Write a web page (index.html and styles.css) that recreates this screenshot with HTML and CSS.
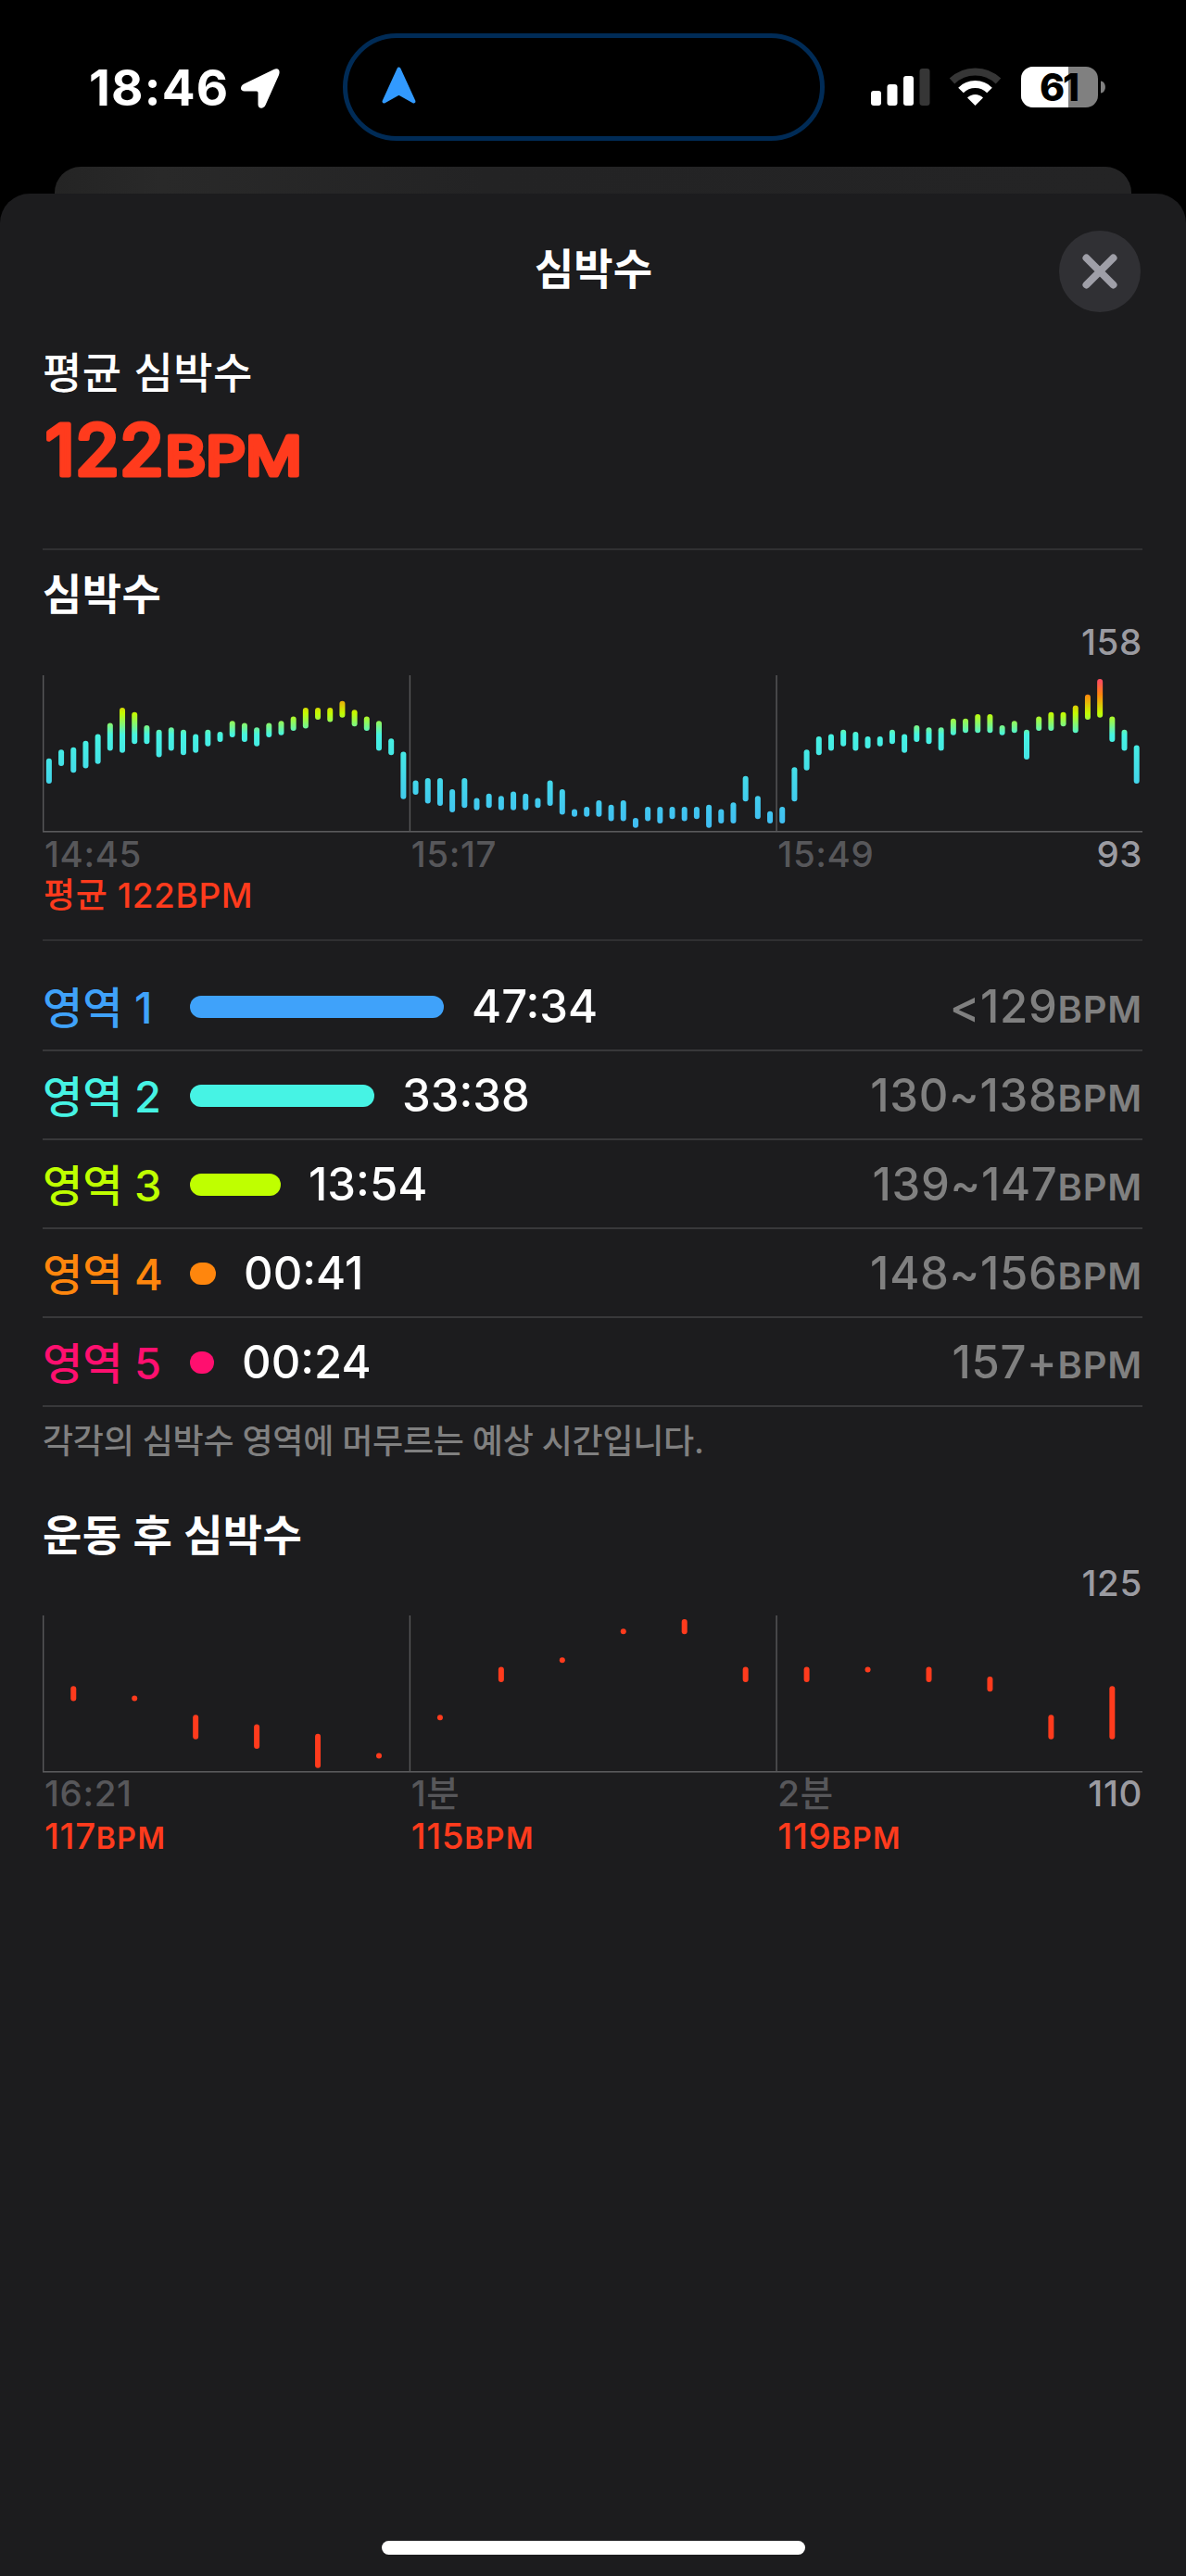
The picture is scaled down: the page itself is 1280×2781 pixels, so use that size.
FILE: index.html
```html
<!DOCTYPE html>
<html lang="ko">
<head>
  <meta charset="UTF-8" />
  <title>심박수</title>
  <link rel="stylesheet" href="styles.css">
</head>
<body>
  <!-- Status bar -->
  <div class="status-bar">
    <div class="clock">
      <span class="time">18:46</span>
      <svg class="location-icon" viewBox="0 0 42 43">
        <path d="M35.500 1 L3.500 16.500 C-1.500 19 -1 24.500 4 24.500 H17 Q18.500 24.500 18.500 26 V39 C18.500 43.500 24.500 44 26.500 39.500 L41 7 C43 2 40 -1 35.500 1 Z" fill="#fff"/>
      </svg>
    </div>
    <div class="island">
      <svg class="nav-arrow" viewBox="0 0 37 40">
        <path d="M18.500 2.500 L34.500 37.500 L18.500 28.500 L2.500 37.500 Z" fill="#329aff" stroke="#329aff" stroke-width="4" stroke-linejoin="round"/>
      </svg>
    </div>
    <div class="status-icons">
      <svg class="signal-icon" viewBox="0 0 64 41">
        <rect x="0" y="25" width="11" height="16" rx="3" fill="#fff"/>
        <rect x="17.500" y="18" width="11" height="23" rx="3" fill="#fff"/>
        <rect x="35" y="9" width="11" height="32" rx="3" fill="#fff"/>
        <rect x="52.500" y="1" width="11" height="40" rx="3" fill="#363636"/>
      </svg>
      <svg class="wifi-icon" viewBox="0 0 56 41">
        <path d="M3 14.500 A36 36 0 0 1 53 14.500" fill="none" stroke="#363636" stroke-width="8"/>
        <path d="M12.500 24.500 A22 22 0 0 1 43.500 24.500" fill="none" stroke="#fff" stroke-width="8"/>
        <path d="M19.500 32.500 A12 12 0 0 1 36.500 32.500 L28 41 Z" fill="#fff"/>
      </svg>
      <svg class="battery-icon" viewBox="0 0 91 44">
        <defs>
          <clipPath id="batteryShape"><rect x="0" y="0" width="83" height="44" rx="13"/></clipPath>
        </defs>
        <g clip-path="url(#batteryShape)">
          <rect x="0" y="0" width="83" height="44" fill="#808080"/>
          <rect x="0" y="0" width="51" height="44" fill="#fff"/>
        </g>
        <path d="M86 15.500 C92.500 16 92.500 28 86 28.500 Z" fill="#808080"/>
        <text x="40.500" y="36.500" text-anchor="middle" class="battery-text">61</text>
      </svg>
    </div>
  </div>

  <div class="back-card"></div>

  <div class="sheet">
    <div class="sheet-header">
      <h1>심박수</h1>
      <button class="close-btn" aria-label="닫기">
        <svg viewBox="0 0 38 38">
          <path d="M4.500 4.500 L33.500 33.500 M33.500 4.500 L4.500 33.500" stroke="#9f9fa8" stroke-width="8" stroke-linecap="round"/>
        </svg>
      </button>
    </div>

    <!-- Average heart rate -->
    <div class="average">
      <div class="average-label">평균 심박수</div>
      <svg class="average-value" viewBox="0 0 300 117">
        <text x="3" y="85.500" class="average-number" textLength="128" lengthAdjust="spacingAndGlyphs">122</text>
        <text x="132" y="85.500" class="average-unit" textLength="148" lengthAdjust="spacingAndGlyphs">BPM</text>
      </svg>
    </div>

    <!-- Workout heart rate -->
    <div class="section workout">
      <h2>심박수</h2>
      <div class="peak">158</div>
      <svg class="chart" id="workoutChart" viewBox="0 0 1187 170">
        <defs>
          <linearGradient id="zoneGradient" gradientUnits="userSpaceOnUse" x1="0" y1="7" x2="0" y2="161.700">
            <stop offset="0" stop-color="#ff4f5c"/>
            <stop offset="0.090" stop-color="#ff850d"/>
            <stop offset="0.220" stop-color="#c4fb00"/>
            <stop offset="0.370" stop-color="#46f3e2"/>
            <stop offset="1" stop-color="#40bdf2"/>
          </linearGradient>
        </defs>
      </svg>
      <div class="axis-labels">
        <span>14:45</span>
        <span>15:17</span>
        <span>15:49<em>93</em></span>
      </div>
      <div class="chart-average">평균 122BPM</div>
    </div>

    <!-- Heart rate zones -->
    <div class="zones">
      <div class="zone zone-1">
        <span class="zone-name">영역 1</span>
        <span class="zone-bar" style="width: 274px"></span>
        <span class="zone-time">47:34</span>
        <span class="zone-range">&lt;129<small>BPM</small></span>
      </div>
      <div class="zone zone-2">
        <span class="zone-name">영역 2</span>
        <span class="zone-bar" style="width: 199px"></span>
        <span class="zone-time">33:38</span>
        <span class="zone-range">130~138<small>BPM</small></span>
      </div>
      <div class="zone zone-3">
        <span class="zone-name">영역 3</span>
        <span class="zone-bar" style="width: 98px"></span>
        <span class="zone-time">13:54</span>
        <span class="zone-range">139~147<small>BPM</small></span>
      </div>
      <div class="zone zone-4">
        <span class="zone-name">영역 4</span>
        <span class="zone-bar" style="width: 28px"></span>
        <span class="zone-time">00:41</span>
        <span class="zone-range">148~156<small>BPM</small></span>
      </div>
      <div class="zone zone-5">
        <span class="zone-name">영역 5</span>
        <span class="zone-bar" style="width: 26px"></span>
        <span class="zone-time">00:24</span>
        <span class="zone-range">157+<small>BPM</small></span>
      </div>
    </div>
    <p class="zones-note">각각의 심박수 영역에 머무르는 예상 시간입니다.</p>

    <!-- Post-workout heart rate -->
    <div class="section recovery">
      <h2>운동 후 심박수</h2>
      <div class="peak">125</div>
      <svg class="chart" id="recoveryChart" viewBox="0 0 1187 170"></svg>
      <div class="axis-labels">
        <span>16:21</span>
        <span>1분</span>
        <span>2분<em>110</em></span>
      </div>
      <div class="axis-values">
        <span>117<small>BPM</small></span>
        <span>115<small>BPM</small></span>
        <span>119<small>BPM</small></span>
      </div>
    </div>
    <div class="home-indicator"></div>
  </div>

  <script>
    // [low, high] BPM for each slice of the workout
    const workout = [
      [113,122],[121,126],[118,127],[120,130],[122,133],[128,138],[127,145],[131,143],[131,137],[125,135],
      [128,136],[126,135],[127,133],[130,135],[132,134],[134,139],[132,138],[130,136],[134,138],[135,139],
      [137,141],[138,145],[142,145],[141,145],[143,148],[139,144],[137,141],[128,139],[126,131],[106,125],
      [108,112],[104,113],[103,113],[100,108],[102,113],[101,104],[102,106],[101,105],[101,107],[101,106],
      [102,104],[103,112],[99,108],[98,99],[98,100],[98,103],[96,101],[96,103],[93,95],[96,100],
      [95,100],[97,100],[96,100],[97,100],[93,101],[95,99],[95,102],[105,114],[97,105],[95,98],
      [95,100],[105,118],[119,126],[126,132],[128,133],[130,135],[128,134],[129,132],[130,132],[131,135],
      [127,133],[132,137],[131,136],[128,136],[135,140],[136,140],[136,142],[136,142],[135,137],[136,139],
      [124,135],[137,141],[137,143],[139,143],[136,146],[142,151],[143,158],[132,141],[128,135],[113,128]
    ];
    const recovery = [
      [117,118],[117,117],[113,115],[112,114],[110,113],[111,111],
      [115,115],[119,120],[121,121],[124,124],[124,125],[119,120],
      [119,120],[120,120],[119,120],[118,119],[113,115],[113,118]
    ];

    function addShape(svg, x, y, width, height, radius, fill) {
      const rect = document.createElementNS('http://www.w3.org/2000/svg', 'rect');
      const attrs = { x, y, width, height, rx: radius, fill };
      for (const name in attrs) rect.setAttribute(name, attrs[name]);
      svg.appendChild(rect);
    }

    function drawChart(id, data, min, max, fill) {
      const svg = document.getElementById(id);
      // grid lines and baseline
      for (let i = 0; i < 3; i++) {
        addShape(svg, i * 395.7, 0, 1.4, 169, 0, '#59595b');
      }
      addShape(svg, 0, 168, 1187, 1.6, 0, '#59595b');

      const step = 1187 / data.length;
      const scale = 154.7 / (max - min);
      data.forEach(([low, high], i) => {
        const x = step * (i + 0.5) - 2.7;
        const y = 4 + (max - high) * scale;
        addShape(svg, x, y, 6, (high - low) * scale + 6, 3, fill);
      });
    }

    drawChart('workoutChart', workout, 93, 158, 'url(#zoneGradient)');
    drawChart('recoveryChart', recovery, 110, 125, '#ff3b1d');
  </script>
</body>
</html>
```
FILE: styles.css
```css
* {
  margin: 0;
  padding: 0;
  box-sizing: border-box;
}
body {
  width: 1280px;
  height: 2781px;
  background-color: #000;
  color: #fff;
  font-family: Inter, 'Noto Sans CJK KR', sans-serif;
  display: flex;
  flex-direction: column;
  overflow: hidden;
}
svg {
  display: block;
  overflow: visible;
}
/* Status bar */
.status-bar {
  height: 180px;
  flex: none;
  display: grid;
  grid-template-columns: 370px 520px 390px;
}
.clock {
  display: flex;
  padding: 71px 0 0 96px;
}
.time {
  width: 164px;
  font-size: 53px;
  font-weight: 700;
  line-height: 48px;
  letter-spacing: 1.2px;
}
.location-icon {
  width: 42px;
  height: 43px;
  margin-top: 3px;
}
.island {
  height: 116px;
  margin-top: 36px;
  border: 5px solid #002b56;
  border-radius: 58px;
  padding: 31px 37px;
}
.nav-arrow {
  width: 37px;
  height: 40px;
}
.status-icons {
  display: flex;
  padding: 72px 0 0 50px;
}
.signal-icon {
  width: 64px;
  height: 41px;
  margin: 1px 20px 0 0;
}
.wifi-icon {
  width: 57px;
  height: 41px;
  margin: 1px 21px 0 0;
}
.battery-icon {
  width: 91px;
  height: 44px;
}
.battery-text {
  font-size: 41px;
  font-weight: 800;
  letter-spacing: -2px;
}
/* Stacked cards */
.back-card {
  height: 29px;
  flex: none;
  margin: 0 59px;
  background: linear-gradient(90deg, #242424, #292929 10%, #232324 40%, #242425);
  border-radius: 28px 28px 0 0;
}
.sheet {
  flex: 1;
  background-color: #1c1c1e;
  border-radius: 32px 32px 0 0;
  padding: 0 47px 0 46px;
  display: flex;
  flex-direction: column;
}
.sheet-header {
  height: 168px;
  display: grid;
  grid-template-columns: 88px 1fr 88px;
  align-items: center;
  margin-right: 2px;
}
h1 {
  grid-column: 2;
  font-size: 46px;
  font-weight: 600;
  line-height: 48px;
  text-align: center;
  padding: 0 0 6px 4px;
}
.close-btn {
  width: 88px;
  height: 88px;
  border: none;
  border-radius: 50%;
  background-color: #303034;
  display: flex;
  align-items: center;
  justify-content: center;
}
.close-btn svg {
  width: 38px;
  height: 38px;
}
/* Average */
.average {
  padding-bottom: 48px;
  border-bottom: 2px solid #303032;
}
.average-label {
  font-size: 46px;
  font-weight: 500;
  line-height: 50px;
  letter-spacing: 0.5px;
}
.average-value {
  width: 300px;
  height: 117px;
  fill: #ff3b1d;
  stroke: #ff3b1d;
  stroke-width: 5;
  stroke-linejoin: round;
}
.average-number {
  font-size: 75px;
  font-weight: 400;
}
.average-unit {
  font-size: 58px;
  font-weight: 400;
}
/* Charts */
h2 {
  font-size: 46px;
  font-weight: 600;
  line-height: 48px;
  letter-spacing: 0.4px;
}
.peak {
  font-size: 38.5px;
  font-weight: 500;
  line-height: 56px;
  color: #9b9ba1;
  text-align: right;
  letter-spacing: 0.7px;
}
.chart {
  width: 1187px;
  height: 170px;
}
.axis-labels,
.axis-values {
  display: grid;
  grid-template-columns: repeat(3, 1fr);
  font-size: 38.5px;
  font-weight: 500;
  line-height: 46px;
  letter-spacing: 0.6px;
}
.axis-labels span,
.axis-values span {
  padding-left: 2px;
}
.axis-labels {
  color: #57575a;
}
.axis-labels span {
  display: flex;
}
.axis-labels em {
  font-style: normal;
  color: #9b9ba1;
  margin-left: auto;
}
.axis-values,
.chart-average {
  color: #ff3b1d;
}
.axis-values small {
  font-size: 32px;
  font-weight: 600;
  letter-spacing: 1.5px;
}
.chart-average {
  font-size: 37px;
  font-weight: 500;
  line-height: 44px;
  letter-spacing: 0.6px;
  padding-left: 1px;
}
.workout {
  padding: 23px 0 25px;
  border-bottom: 2px solid #303032;
}
.workout .chart {
  margin-top: 8px;
}
.recovery {
  padding-top: 55px;
}
.recovery .peak {
  line-height: 56px;
}
.recovery .chart {
  margin-top: 7px;
}
.recovery .axis-labels {
  line-height: 45px;
}
/* Zones */
.zones {
  padding-top: 23px;
}
.zone {
  height: 96px;
  border-bottom: 2px solid #38383a;
  display: flex;
  align-items: center;
  font-size: 49px;
  font-weight: 500;
}
.zone-name {
  width: 159px;
  font-size: 47px;
  padding-bottom: 4px;
}
.zone-bar {
  height: 24px;
  border-radius: 12px;
  margin: 2px 30px 0 0;
}
.zone-range {
  margin-left: auto;
  color: #808080;
  letter-spacing: 0.7px;
}
.zone-range small {
  font-size: 40px;
  font-weight: 600;
  letter-spacing: 0.8px;
}
.zone-1 .zone-name { color: #3fa2fa; }
.zone-1 .zone-bar { background-color: #3fa2fa; }
.zone-2 .zone-name { color: #46f3e4; }
.zone-2 .zone-bar { background-color: #46f3e4; }
.zone-3 .zone-name { color: #bfff00; }
.zone-3 .zone-bar { background-color: #bfff00; }
.zone-4 .zone-name { color: #ff860d; }
.zone-4 .zone-bar { background-color: #ff860d; }
.zone-5 .zone-name { color: #ff0f6f; }
.zone-5 .zone-bar { background-color: #ff0f6f; }
.zones-note {
  font-size: 36px;
  font-weight: 500;
  line-height: 44px;
  letter-spacing: -0.3px;
  color: #808080;
  padding-top: 15px;
}
.home-indicator {
  width: 457px;
  height: 15px;
  flex: none;
  border-radius: 8px;
  background-color: #fff;
  margin: auto 364px 23px auto;
}
```
